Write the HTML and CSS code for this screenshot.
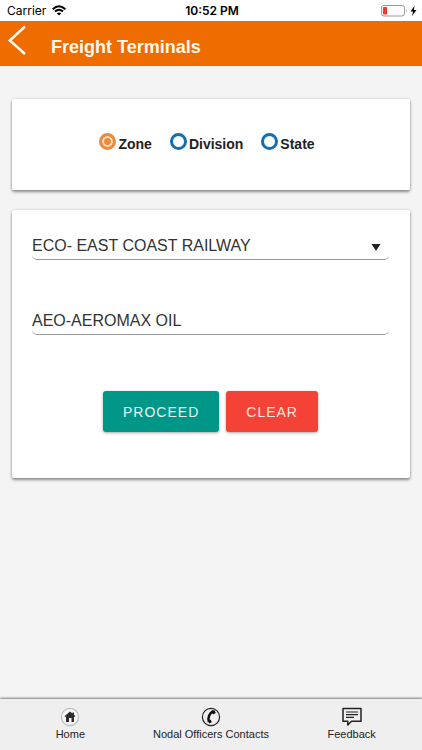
FILE: index.html
```html
<!DOCTYPE html>
<html lang="en">
<head>
<meta charset="utf-8">
<meta name="viewport" content="width=device-width, initial-scale=1">
<title>Freight Terminals</title>
<link rel="stylesheet" href="styles.css">
</head>
<body>
<div class="status">
  <div class="carrier">Carrier
    <svg width="14" height="11" viewBox="0 0 14 11" aria-hidden="true"><g fill="none" stroke="#000" stroke-width="2"><path d="M.7 4.2Q7-1.8 13.3 4.2"/><path d="M3 6.6Q7 2.9 11 6.6"/></g><path d="M4.8 8.3Q7 6.5 9.2 8.3L7 10.6z"/></svg>
  </div>
  <time class="clock">10:52 PM</time>
  <div class="power">
    <svg width="36" height="12" viewBox="0 0 36 12" aria-hidden="true"><rect x=".5" y=".5" width="23" height="10.500" rx="2.500" fill="none" stroke="#999"/><rect x="2" y="2" width="4" height="7.500" rx=".8" fill="#f5352e"/><path d="M25 4q1.500 1.800 0 4z" fill="#999"/><path d="M33.600.8L29.500 6.500h2.600L31 11l4.500-6h-2.700z"/></svg>
  </div>
</div>
<header class="bar">
  <a class="back" href="#" aria-label="Back"><svg width="18" height="30" viewBox="0 0 18 30" aria-hidden="true"><path d="M17 1.500L1.800 15.500L17 29" fill="none" stroke="#fff" stroke-width="2.400"/></svg></a>
  <h1>Freight Terminals</h1>
</header>
<main>
  <form class="cards">
    <fieldset class="card choices" aria-label="Search by">
      <label><input type="radio" name="by" checked><span>Zone</span></label>
      <label><input type="radio" name="by"><span>Division</span></label>
      <label><input type="radio" name="by"><span>State</span></label>
    </fieldset>
    <section class="card fields">
      <div class="picker">
        <select class="field" aria-label="Zone"><option>ECO- EAST COAST RAILWAY</option></select>
        <svg class="arrow" width="10" height="7" viewBox="0 0 10 7" aria-hidden="true"><path d="M.5 0h9L5 7z" fill="#222"/></svg>
      </div>
      <input class="field" type="text" value="AEO-AEROMAX OIL" aria-label="Terminal">
      <div class="actions">
        <button class="proceed" type="button">PROCEED</button>
        <button class="clear" type="button">CLEAR</button>
      </div>
    </section>
  </form>
</main>
<nav class="tabs">
  <a href="#"><svg width="20" height="20" viewBox="0 0 20 20" aria-hidden="true"><circle cx="10" cy="10" r="8.600" fill="#f5f5f5" stroke="#bbb" stroke-width="1.200"/><path d="M10 4.500L4.500 9.300l.7.800.8-.5V15h3v-4h2.500v4H14V9.600l.8.500.7-.8-1.500-1.500V5.400h-1.500v1.200z" fill="#2c2c2c"/></svg>Home</a>
  <a href="#"><svg width="20" height="20" viewBox="0 0 20 20" aria-hidden="true"><circle cx="10" cy="10" r="8.600" fill="none" stroke="#222" stroke-width="1.200"/><path d="M12 4.500C8.500 6 6.500 10.500 8 15" fill="none" stroke="#111" stroke-width="2.600"/><path d="M10.500 3.600l3-.4 1.300 2.800-2.800 1.500zM7 13.200l2.800-.5 1 2.600-2.600 1.300z" fill="#111"/></svg>Nodal Officers Contacts</a>
  <a href="#"><svg width="20" height="20" viewBox="0 0 20 20" aria-hidden="true"><path d="M1 1.500h18v12.700H9.500L5.800 18v-3.800H1z" fill="none" stroke="#222" stroke-width="1.500" stroke-linejoin="round"/><path d="M4 5h12M4 7.700h12M4 10.400h8" stroke="#222" stroke-width="1.200"/></svg>Feedback</a>
</nav>
</body>
</html>
```
FILE: styles.css
```css
* { box-sizing: border-box; }
body {
  margin: 0;
  min-height: 100vh;
  display: flex;
  flex-direction: column;
  background: #f4f4f4;
  color: #222;
  font-family: "Liberation Sans", Arial, sans-serif;
}
.status {
  display: grid;
  grid-template-columns: 1fr auto 1fr;
  align-items: center;
  height: 21px;
  padding: 0 5px 0 7px;
  background: #fff;
  color: #000;
  font: 12px/21px Inter, sans-serif;
}
.carrier { display: flex; align-items: center; gap: 6px; }
.clock { font-weight: 600; }
.power { display: flex; justify-content: flex-end; }
.bar {
  display: flex;
  height: 45px;
  padding-left: 8px;
  gap: 25px;
  background: #ef6c00;
}
.back { padding-top: 4px; }
.back svg, .tabs svg { display: block; }
h1 {
  margin: 0;
  padding-top: 4px;
  color: #fff8ea;
  font-size: 18px;
  line-height: 45px;
}
main { flex: 1; padding: 33px 12px; }
.cards { display: flex; flex-direction: column; gap: 20px; }
.card {
  margin: 0;
  border: 0;
  border-radius: 2px;
  background: #fff;
  box-shadow: 0 2px 3px rgba(0, 0, 0, .4), 0 0 3px rgba(0, 0, 0, .15);
}
.choices {
  display: flex;
  justify-content: center;
  gap: 18px;
  height: 91px;
  padding: 34px 8px 0 0;
  font-size: 14px;
  font-weight: bold;
  line-height: 22px;
}
.choices label { display: flex; gap: 2px; }
.choices input {
  appearance: none;
  width: 17px;
  height: 17px;
  margin: 0;
  border: 3px solid #146eb0;
  border-radius: 50%;
}
.choices input:checked {
  border-color: #ee8a3c;
  background: radial-gradient(circle, #ee8a3c 3px, #fbe0c5 4px, #fbe0c5 5px, #ee8a3c 6px);
}
.fields { padding: 20px 21px 46px 20px; }
.picker { position: relative; margin-bottom: 45px; }
.field {
  display: block;
  width: 100%;
  height: 30px;
  padding: 2px 0 0;
  appearance: none;
  border: 0;
  border-bottom: 1px solid #999;
  border-radius: 5px;
  background: #fff;
  color: #333;
  font: 16px/27px "Liberation Sans", Arial, sans-serif;
}
.arrow { position: absolute; right: 8px; top: 14px; }
.actions { display: flex; justify-content: center; gap: 7px; margin-top: 56px; }
.actions button {
  height: 41px;
  padding: 0 20px;
  border: 0;
  border-radius: 3px;
  color: #e0f7f3;
  font: 14px "Liberation Sans", Arial, sans-serif;
  letter-spacing: 1px;
  box-shadow: 0 1px 3px rgba(0, 0, 0, .35);
}
.actions .proceed { background: #009688; }
.actions .clear { background: #f44336; color: #ffe3e0; }
.tabs {
  display: grid;
  grid-template-columns: repeat(3, 1fr);
  height: 51px;
  padding-top: 8px;
  background: #efefef;
  box-shadow: 0 -1px 2px rgba(0, 0, 0, .5);
}
.tabs a {
  display: flex;
  flex-direction: column;
  align-items: center;
  color: #222;
  font-size: 11px;
  line-height: 14px;
  text-decoration: none;
}
```
